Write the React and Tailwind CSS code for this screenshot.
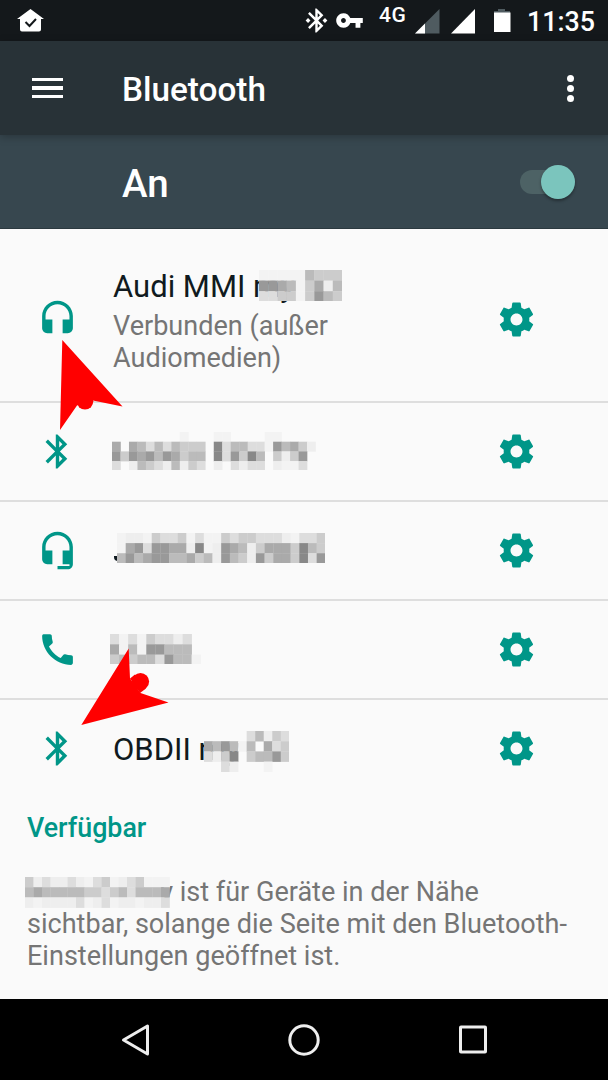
import clsx from "clsx";

const icons = {
  headset:
    "M12 1c-4.97 0-9 4.03-9 9v7c0 1.66 1.34 3 3 3h3v-8H5v-2c0-3.87 3.13-7 7-7s7 3.13 7 7v2h-4v8h3c1.66 0 3-1.34 3-3v-7c0-4.97-4.03-9-9-9z",
  headsetMic:
    "M12 1c-4.97 0-9 4.03-9 9v7c0 1.66 1.34 3 3 3h3v-8H5v-2c0-3.87 3.13-7 7-7s7 3.13 7 7v2h-4v8h4v1h-7v2h6c1.66 0 3-1.34 3-3V10c0-4.97-4.03-9-9-9z",
  bluetooth:
    "M17.71 7.71L12 2h-1v7.59L6.41 5 5 6.41 10.59 12 5 17.59 6.41 19 11 14.41V22h1l5.71-5.71-4.3-4.29 4.3-4.29zM13 5.83l1.88 1.88L13 9.59V5.83zm1.88 10.46L13 18.17v-3.76l1.88 1.88z",
  bluetoothConnected:
    "M7 12l-2-2-2 2 2 2 2-2zm10.71-4.29L12 2h-1v7.59L6.41 5 5 6.41 10.59 12 5 17.59 6.41 19 11 14.41V22h1l5.71-5.71-4.3-4.29 4.3-4.29zM13 5.83l1.88 1.88L13 9.59V5.83zm1.88 10.46L13 18.17v-3.76l1.88 1.88zM19 10l-2 2 2 2 2-2-2-2z",
  call:
    "M20.01 15.38c-1.23 0-2.42-.2-3.53-.56-.35-.12-.74-.03-1.01.24l-1.57 1.97c-2.83-1.35-5.48-3.9-6.89-6.83l1.95-1.66c.27-.28.35-.67.24-1.02-.37-1.11-.56-2.3-.56-3.53 0-.54-.45-.99-.99-.99H4.19C3.65 3 3 3.24 3 3.99 3 13.28 10.73 21 20.01 21c.71 0 .99-.63.99-1.18v-3.45c0-.54-.45-.99-.99-.99z",
  settings:
    "M19.43 12.98c.04-.32.07-.64.07-.98s-.03-.66-.07-.98l2.11-1.65c.19-.15.24-.42.12-.64l-2-3.46c-.12-.22-.39-.3-.61-.22l-2.49 1c-.52-.4-1.08-.73-1.69-.98l-.38-2.65C14.46 2.18 14.25 2 14 2h-4c-.25 0-.46.18-.49.42l-.38 2.65c-.61.25-1.17.59-1.69.98l-2.49-1c-.23-.09-.49 0-.61.22l-2 3.46c-.13.22-.07.49.12.64l2.11 1.65c-.04.32-.07.65-.07.98s.03.66.07.98l-2.11 1.65c-.19.15-.24.42-.12.64l2 3.46c.12.22.39.3.61.22l2.49-1c.52.4 1.08.73 1.69.98l.38 2.65c.03.24.24.42.49.42h4c.25 0 .46-.18.49-.42l.38-2.65c.61-.25 1.17-.59 1.69-.98l2.49 1c.23.09.49 0 .61-.22l2-3.46c.12-.22.07-.49-.12-.64l-2.11-1.65zM12 15.5c-1.93 0-3.5-1.57-3.5-3.5s1.57-3.5 3.5-3.5 3.5 1.57 3.5 3.5-1.57 3.5-3.5 3.5z",
  key:
    "M12.65 10C11.83 7.67 9.61 6 7 6c-3.31 0-6 2.69-6 6s2.69 6 6 6c2.61 0 4.83-1.67 5.65-4H17v4h4v-4h2v-4H12.65zM7 14c-1.1 0-2-.9-2-2s.9-2 2-2 2 .9 2 2-.9 2-2 2z",
};

const devices = [
  {
    name: "Audi MMI my",
    status: "Verbunden (außer Audiomedien)",
    icon: "headset",
    row: "h-[174px] border-b-2 pt-2",
    mosaic: {
      rows: ["fffffbccc", "99abfcaeb", "ddccfc9bc"],
      cell: [9.22, 10.6],
      className: "left-[146px] top-[5px]",
    },
  },
  {
    icon: "bluetooth",
    row: "h-[99px] border-b-2",
    mosaic: {
      rows: [
        "........f...ff....ff....",
        "a.abdbdbccc.8dbbddf9bace",
        "9c9a9b9acbb.8d9c8b.cec9.",
        "d.ebcdebecd.e.dedd.effd.",
      ],
      cell: [8.48, 9.7],
      className: "-left-px top-0",
    },
  },
  {
    icon: "headsetMic",
    row: "h-[99px] border-b-2",
    tick: true,
    mosaic: {
      rows: [
        "feefcddcfdffcdccdddefddc",
        "fa9d99aae8fe9abecaaac8bc",
        "b9ba99bbacbe9bce9caac8d9",
      ],
      cell: [8.68, 10.1],
      className: "left-[4px] top-[2px]",
    },
  },
  {
    icon: "call",
    row: "h-[99px] border-b-2",
    mosaic: {
      rows: ["dfdfcdded.", "afbf99bbb.", "cbcbbd9bbf"],
      cell: [9.07, 10.3],
      className: "left-[-3px] top-[4px]",
    },
  },
  {
    name: "OBDII my",
    icon: "bluetooth",
    row: "h-[96px]",
    mosaic: {
      rows: [".....dbecd", "ab9bfb.adc", "dec8.cbb9c", "..de...f.."],
      cell: [8.53, 10.2],
      className: "left-[91px] top-[3px]",
    },
  },
];

const summaryMosaic = {
  rows: ["cedeedefdcfedcfff", "babbbbbccdcbdbbba", "efeeeedfedfeefeed"],
  cell: [8.5, 10.2],
  className: "left-[-2px] top-[1px]",
};

function Icon({ name, className }) {
  return (
    <svg viewBox="0 0 24 24" fill="currentColor" className={clsx("shrink-0", className)}>
      <path d={icons[name]} />
    </svg>
  );
}

// each character is the grey level of one block
function Mosaic({ rows, cell, className }) {
  const [w, h] = cell;

  return (
    <svg
      width={rows[0].length * w}
      height={rows.length * h}
      className={clsx("absolute max-w-none", className)}
    >
      {rows.map((row, y) =>
        row.split("").map((level, x) => {
          if (level === ".") {
            return null;
          }
          return (
            <rect
              key={`${x}-${y}`}
              x={x * w}
              y={y * h}
              width={w + 0.3}
              height={h + 0.3}
              fill={level === "f" ? "#f3f3f3" : `#${level.repeat(3)}`}
            />
          );
        }),
      )}
    </svg>
  );
}

function StatusBar() {
  return (
    <header className="flex h-[41px] shrink-0 items-start bg-[#14181b] text-white">
      <svg viewBox="0 0 27 23" className="ml-[17px] mt-[9px] h-[23px] w-[27px]">
        <path d="M13.5 0L0 10h3v10.500q0 2 2 2h17q2 0 2-2V10h3z" fill="#fff" />
        <path d="M8.500 13l4 4 6.500-7" fill="none" stroke="#14181b" strokeWidth="2" />
      </svg>
      <Icon name="bluetoothConnected" className="ml-[258px] mt-[6px] size-[29px]" />
      <Icon name="key" className="ml-[4px] mt-[6px] size-[29px]" />
      <span className="ml-[15px] mt-[3px] w-[36px] text-[21px] font-medium leading-6 tracking-[0.5px]">
        4G
      </span>
      <svg viewBox="0 0 96 25" className="mt-[9px] h-[25px] w-[96px] shrink-0">
        <path d="M0 24.500L24.500 0v24.500z" fill="#4f5b60" />
        <path d="M0 24.500L10 14.500v10z" fill="#fff" />
        <path d="M36 24.500L60 0v24.500z" fill="#fff" />
        <path d="M83 0h7v2h5v2H79V2h4z" fill="#4f5b60" />
        <path d="M79 3.500h16.500V23H79z" fill="#fff" />
      </svg>
      <span className="ml-[16px] mt-[6px] text-[26.800px] font-medium leading-8">11:35</span>
    </header>
  );
}

function AppBar() {
  return (
    <div className="z-10 flex h-[94px] shrink-0 items-center bg-[#283237] text-white shadow-[0_2px_8px_rgba(0,0,0,0.25)]">
      <div className="ml-8 flex w-[31px] flex-col gap-[5px]">
        <span className="h-[3.5px] bg-white" />
        <span className="h-[3.5px] bg-white" />
        <span className="h-[3.5px] bg-white" />
      </div>
      <h1 className="ml-[59px] mt-[3px] text-[33.300px] font-medium leading-10">Bluetooth</h1>
      <div className="ml-auto mr-[34px] flex flex-col gap-[3px]">
        <span className="size-[7px] rounded-full bg-white" />
        <span className="size-[7px] rounded-full bg-white" />
        <span className="size-[7px] rounded-full bg-white" />
      </div>
    </div>
  );
}

function SwitchBar() {
  return (
    <div className="flex h-[94px] shrink-0 items-center border-b border-[#2b393f] bg-[#37474f] text-white">
      <span className="ml-[122px] mt-[5px] text-[38.500px] font-medium leading-[46px]">An</span>
      <div className="ml-auto mr-[33px] flex h-6 w-[55px] items-center justify-end rounded-full bg-[#4d6265]">
        <span className="size-[34px] shrink-0 rounded-full bg-[#7bc5bd] shadow-[0_2px_3px_rgba(0,0,0,0.35)]" />
      </div>
    </div>
  );
}

function DeviceRow({ device }) {
  return (
    <li className={clsx("flex items-center border-[#dedede]", device.row)}>
      <Icon name={device.icon} className="ml-[37px] size-[41px] text-[#009688]" />
      <div className="relative ml-[35px] w-[260px] pt-[4px]">
        <p className="h-9 text-[31px] leading-9 text-[#101a20]">{device.name}</p>
        {device.status ? (
          <p className="mt-[5px] text-[27.050px] leading-8 text-[#757575]">{device.status}</p>
        ) : null}
        {device.tick ? (
          <span className="absolute left-[1px] top-[25px] h-[5px] w-[4px] rounded-bl-[4px] bg-[#101a20]" />
        ) : null}
        <Mosaic {...device.mosaic} />
      </div>
      <Icon name="settings" className="ml-[123px] size-[41px] text-[#009688]" />
    </li>
  );
}

function NavBar() {
  return (
    <nav className="flex h-[81px] shrink-0 items-center justify-between bg-black px-[119px]">
      <svg viewBox="0 0 34 34" className="size-[34px]" fill="none" stroke="#eee" strokeWidth="3">
        <path d="M28.500 3v28L4.500 17z" strokeLinejoin="round" />
      </svg>
      <svg viewBox="0 0 34 34" className="size-[34px]" fill="none" stroke="#eee" strokeWidth="3">
        <circle cx="17" cy="17" r="14.200" />
      </svg>
      <svg viewBox="0 0 34 34" className="size-[34px]" fill="none" stroke="#eee" strokeWidth="3">
        <rect x="5.500" y="4" width="25" height="25" rx="0.500" />
      </svg>
    </nav>
  );
}

function Arrows() {
  return (
    <svg
      viewBox="0 0 608 1080"
      className="pointer-events-none absolute left-0 top-0 z-20 h-[1080px] w-[608px]"
      fill="#f00"
    >
      <path d="M62.300 340L122.500 406.500 93 400.500 77 405.500 60 430z" />
      <circle cx="85" cy="401.300" r="8.300" />
      <path d="M81.300 725L128.700 648.500 130 678.500 140.500 693 168.500 702.500z" />
      <path d="M130 678.500L135 674.500 146 688.500 140 693z" />
      <circle cx="140.500" cy="681.500" r="8.600" />
    </svg>
  );
}

function App() {
  return (
    <div className="relative flex h-[1080px] w-[608px] flex-col overflow-hidden bg-[#fafafa] font-[Roboto,sans-serif]">
      <StatusBar />
      <AppBar />
      <SwitchBar />
      <main className="flex-1">
        <ul>
          {devices.map((device, index) => (
            <DeviceRow key={index} device={device} />
          ))}
        </ul>
        <h2 className="ml-[27px] mt-[16px] text-[26.800px] font-medium leading-8 text-[#009688]">
          Verfügbar
        </h2>
        <p className="relative ml-[27px] mt-8 w-[560px] text-[27.050px] leading-8 text-[#757575]">
          <span className="inline-block w-[146px] text-right">y</span> ist für Geräte in der Nähe
          <br />
          sichtbar, solange die Seite mit den Bluetooth-
          <br />
          Einstellungen geöffnet ist.
          <Mosaic {...summaryMosaic} />
        </p>
      </main>
      <NavBar />
      <Arrows />
    </div>
  );
}

export default App;
